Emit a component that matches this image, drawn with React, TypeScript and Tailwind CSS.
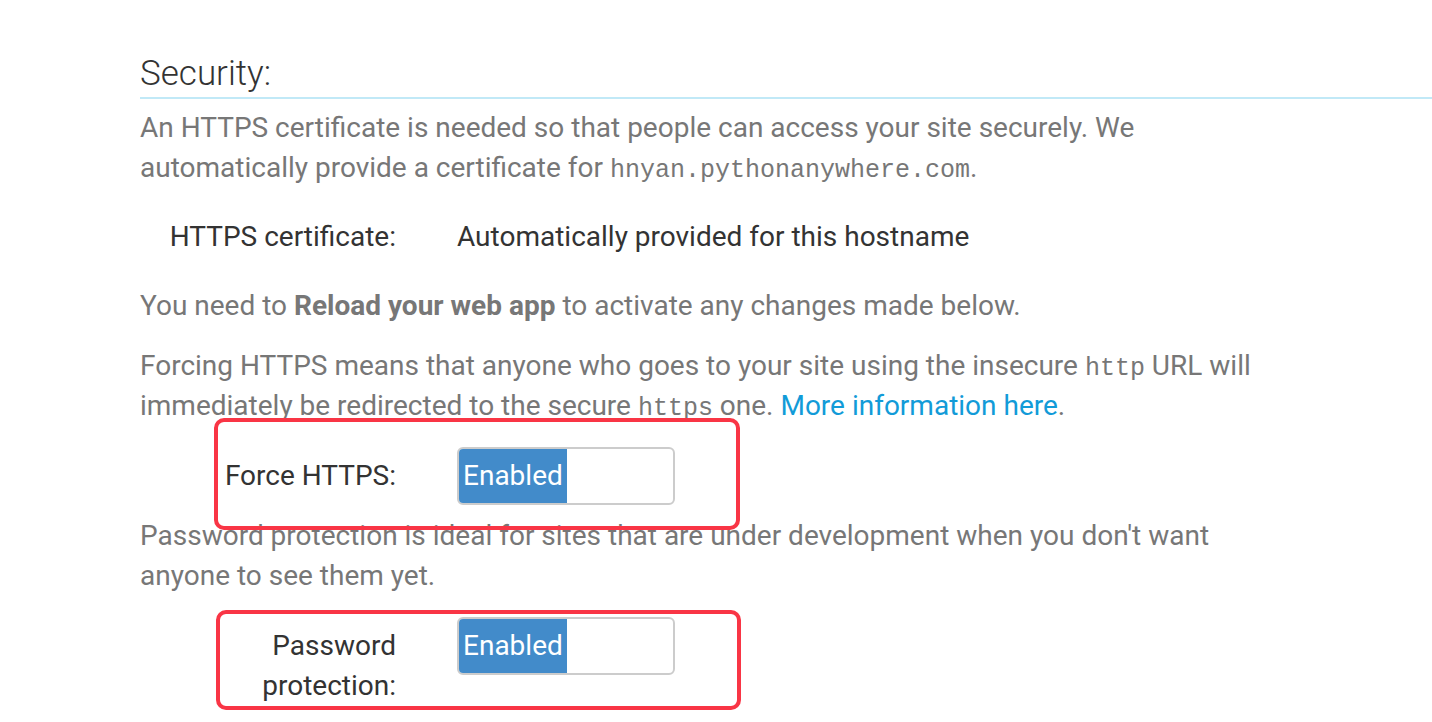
import React from "react";

const Toggle = () => (
  <div className="flex h-[58px] w-[218px] overflow-hidden rounded-[6px] border-2 border-[#cccccc] bg-white">
    <div className="flex h-full w-[108px] items-center bg-[#428bca] pl-[4px] text-white">
      Enabled
    </div>
  </div>
);

const Mono = ({ children }: { children: React.ReactNode }) => (
  <code className="font-['Liberation_Mono',monospace] text-[25px] leading-none">{children}</code>
);

export default function App() {
  return (
    <div className="relative min-h-[722px] bg-white pt-[54px] font-['Roboto',sans-serif] text-[28px] leading-[40px] text-[#777777]">
      {/* heading */}
      <div className="pl-[140px]">
        <h2 className="border-b-2 border-[#c1e9f7] pb-[3px] text-[35px] leading-[40px] font-light text-[#333333]">
          Security:
        </h2>
      </div>

      <div className="w-[1265px] pl-[140px]">
        <p className="mt-[9px]">
          An HTTPS certificate is needed so that people can access your site securely. We automatically provide a
          certificate for <Mono>hnyan.pythonanywhere.com</Mono>.
        </p>

        {/* cert row */}
        <div className="mt-[29px] flex text-[#333333]">
          <div className="w-[256px] text-right">HTTPS certificate:</div>
          <div className="ml-[61px]">Automatically provided for this hostname</div>
        </div>

        <p className="mt-[29px]">
          You need to <b className="font-bold">Reload your web app</b> to activate any changes made below.
        </p>

        <p className="mt-[20px]">
          Forcing HTTPS means that anyone who goes to your site using the insecure <Mono>http</Mono> URL will
          immediately be redirected to the secure <Mono>https</Mono> one.{" "}
          <a className="text-[#129bd8]">More information here</a>.
        </p>

        {/* force https */}
        <div className="mt-[21px] flex items-start text-[#333333]">
          <div className="w-[256px] pt-[9px] text-right">Force HTTPS:</div>
          <div className="ml-[61px]">
            <Toggle />
          </div>
        </div>

        <p className="mt-[11px]">
          Password protection is ideal for sites that are under development when you don't want anyone to see them
          yet.
        </p>

        {/* password */}
        <div className="mt-[21px] flex items-start text-[#333333]">
          <div className="w-[256px] pt-[9px] text-right">
            Password
            <br />
            protection:
          </div>
          <div className="ml-[61px]">
            <Toggle />
          </div>
        </div>
      </div>

      {/* red annotation boxes */}
      <div className="absolute left-[214px] top-[418px] h-[112px] w-[526px] rounded-[10px] border-4 border-[#f93545]" />
      <div className="absolute left-[216px] top-[610px] h-[100px] w-[525px] rounded-[10px] border-4 border-[#f93545]" />
    </div>
  );
}
